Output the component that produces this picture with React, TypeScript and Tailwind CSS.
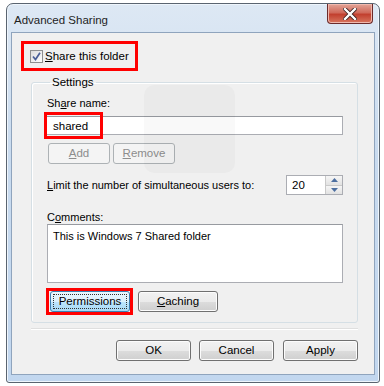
import React from "react";

const font = { fontFamily: '"Liberation Sans", Arial, sans-serif' };

function Btn({
  children,
  w,
  disabled,
  focused,
}: {
  children: React.ReactNode;
  w: string;
  disabled?: boolean;
  focused?: boolean;
}) {
  if (disabled) {
    return (
      <div
        className={`${w} h-[21px] rounded-[3px] border border-[#adb2b5] bg-[#f4f4f4] flex items-center justify-center text-[11.5px] text-[#8d8d8d]`}
      >
        {children}
      </div>
    );
  }
  if (focused) {
    return (
      <div
        className={`${w} h-[21px] rounded-[3px] border border-[#3c7fb1] bg-[linear-gradient(#eaf6fd_0%,#d9f0fc_50%,#bee6fd_50%,#a7d9f5_100%)] p-[2px] flex`}
      >
        <div className="flex-1 border border-dotted border-[#333] flex items-center justify-center text-[11.5px] text-black">
          {children}
        </div>
      </div>
    );
  }
  return (
    <div
      className={`${w} h-[21px] rounded-[3px] border border-[#707070] bg-[linear-gradient(#f2f2f2_0%,#ebebeb_50%,#dddddd_50%,#cfcfcf_100%)] shadow-[inset_0_0_0_1px_#fcfcfc] flex items-center justify-center text-[11.5px] text-black`}
    >
      {children}
    </div>
  );
}

export default function App() {
  return (
    <div className="w-[384px] h-[386px] bg-white pt-[3px] pl-[6px]" style={font}>
      <div className="relative w-[374px] h-[380px] rounded-t-[7px] rounded-b-[3px] border border-[#5a6470] bg-[linear-gradient(180deg,#dde8f4_0%,#c9dbef_40%,#c2d7ef_100%)] flex flex-col shadow-[inset_0_0_0_1px_#eef5fc]">
        {/* title bar */}
        <div className="h-[28px] flex items-start justify-between">
          <div className="pl-[7px] pt-[9px] text-[11.5px] leading-[14px] text-[#1e1e1e]">
            Advanced Sharing
          </div>
          <div className="mr-[6px] w-[46px] h-[20px] rounded-b-[4px] border border-t-0 border-[#6b2b2b] bg-[linear-gradient(#e3a598_0%,#d06a5b_45%,#c2402f_55%,#d7765f_100%)] flex items-center justify-center shadow-[inset_0_0_0_1px_#f0b9ae]">
            <svg width="14" height="12" viewBox="0 0 14 12">
              <path
                d="M2 1 L12 11 M12 1 L2 11"
                stroke="#3a2020"
                strokeWidth="4"
                strokeLinecap="square"
              />
              <path
                d="M2 1 L12 11 M12 1 L2 11"
                stroke="#ffffff"
                strokeWidth="2.4"
                strokeLinecap="square"
              />
            </svg>
          </div>
        </div>
        {/* client area */}
        <div className="relative mx-[4px] h-[343px] border border-[#8fa4bd] bg-[#f0f0f0] flex flex-col text-[11px] text-black">
          {/* share checkbox */}
          <div className="mt-[8px] ml-[9px] w-[117px] h-[30px] border-[3px] border-[#ff0000] flex items-center pl-[6px] gap-[2px]">
            <div className="w-[13px] h-[13px] border border-[#8e8f8f] bg-[linear-gradient(135deg,#dcdcdc,#ffffff)] flex items-center justify-center">
              <svg width="9" height="9" viewBox="0 0 9 9">
                <path
                  d="M1 4.5 L3.5 7.5 L8 0.8"
                  stroke="#4a5f97"
                  strokeWidth="1.7"
                  fill="none"
                />
              </svg>
            </div>
            <span className="leading-[14px] text-[11.5px]">
              <u>S</u>hare this folder
            </span>
          </div>

          {/* settings group */}
          <fieldset className="mt-[3px] ml-[19px] w-[327px] h-[249px] rounded-[3px] border border-[#d5dfe5] shadow-[inset_1px_1px_0_#ffffff] pl-[14px] pr-0">
            <legend className="ml-[4px] px-[2px] leading-[16px] text-[11.5px]">Settings</legend>
            <div className="mt-[5px] ml-[1px] leading-[16px]">
              Sh<u>a</u>re name:
            </div>
            <div className="relative mt-[5px] w-[297px] h-[19px] border border-[#abadb3] border-t-[#979aa0] bg-white flex items-center pl-[6px] leading-[14px] text-[11.5px]">
              shared
              <div className="absolute left-[-3px] top-[-5px] w-[59px] h-[27px] border-[3px] border-[#ff0000]" />
            </div>
            <div className="mt-[8px] ml-[2px] flex gap-[3px]">
              <Btn w="w-[62px]" disabled>
                <u>A</u>dd
              </Btn>
              <Btn w="w-[62px]" disabled>
                <u>R</u>emove
              </Btn>
            </div>
            <div className="mt-[11px] ml-[1px] w-[296px] flex items-center h-[20px]">
              <span className="leading-[14px]">
                <u>L</u>imit the number of simultaneous users to:
              </span>
              <div className="ml-auto w-[57px] h-[20px] border border-[#abadb3] bg-white flex">
                <div className="flex-1 flex items-center pl-[5px] leading-[14px] text-[11.5px]">20</div>
                <div className="w-[17px] flex flex-col border-l border-[#c9c9c9]">
                  <div className="flex-1 border-b border-[#c9c9c9] bg-[linear-gradient(#f6f6f6,#e2e2e2)] flex items-center justify-center">
                    <svg width="7" height="4" viewBox="0 0 7 4">
                      <path d="M0 4 L3.5 0 L7 4 Z" fill="#4d6fa0" />
                    </svg>
                  </div>
                  <div className="flex-1 bg-[linear-gradient(#f6f6f6,#e2e2e2)] flex items-center justify-center">
                    <svg width="7" height="4" viewBox="0 0 7 4">
                      <path d="M0 0 L3.5 4 L7 0 Z" fill="#4d6fa0" />
                    </svg>
                  </div>
                </div>
              </div>
            </div>
            <div className="mt-[16px] ml-[1px] leading-[12px]">
              C<u>o</u>mments:
            </div>
            <div className="mt-[1px] ml-[1px] w-[296px] h-[59px] border border-[#abadb3] border-t-[#979aa0] bg-white pl-[5px] pt-[4px] leading-[14px]">
              This is Windows 7 Shared folder
            </div>
            <div className="mt-[5px] flex items-center">
              <div className="w-[87px] h-[27px] border-[3px] border-[#ff0000] flex items-center pl-[1px]">
                <Btn w="w-[80px]" focused>
                  Permissions
                </Btn>
              </div>
              <div className="ml-[5px]">
                <Btn w="w-[80px]">
                  <span>
                    <u>C</u>aching
                  </span>
                </Btn>
              </div>
            </div>
          </fieldset>

          {/* separator */}
          <div className="mt-[5px] ml-[19px] w-[327px] h-[2px] border-t border-[#dfdfdf] border-b border-b-white" />

          {/* bottom buttons */}
          <div className="mt-[10px] ml-[104px] flex gap-[8px]">
            <Btn w="w-[75px]">OK</Btn>
            <Btn w="w-[75px]">Cancel</Btn>
            <div className="ml-[1px]">
              <Btn w="w-[75px]">Apply</Btn>
            </div>
          </div>

          {/* faint watermark logo */}
          <div className="pointer-events-none absolute left-[132px] top-[52px] w-[91px] h-[88px] rounded-[10px] bg-black/[0.025]" />
        </div>
      </div>
    </div>
  );
}
